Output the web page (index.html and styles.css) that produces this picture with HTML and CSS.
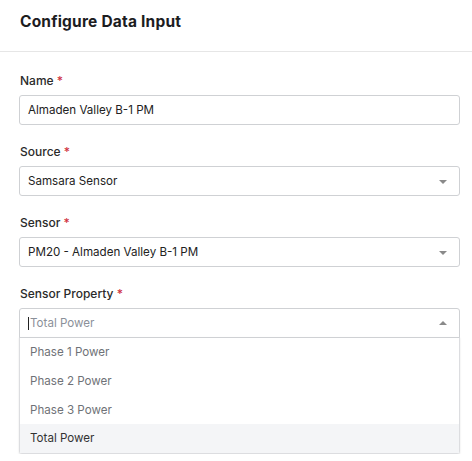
FILE: index.html
```html
<!DOCTYPE html>
<html>
<head>
<meta charset="utf-8">
<link rel="stylesheet" href="styles.css">
</head>
<body>
<div class="panel">
  <div class="header"><h1 class="title">Configure Data Input</h1></div>
  <div class="form">
    <div class="field">
      <label class="label">Name <span class="req">*</span></label>
      <div class="control">Almaden Valley B-1 PM</div>
    </div>
    <div class="field">
      <label class="label">Source <span class="req">*</span></label>
      <div class="control select">Samsara Sensor<span class="caret down"></span></div>
    </div>
    <div class="field">
      <label class="label">Sensor <span class="req">*</span></label>
      <div class="control select">PM20 - Almaden Valley B-1 PM<span class="caret down"></span></div>
    </div>
    <div class="field">
      <label class="label">Sensor Property <span class="req">*</span></label>
      <div class="combo">
        <div class="control select open"><span class="cursor"></span><span class="placeholder">Total Power</span><span class="caret up"></span></div>
        <ul class="menu">
          <li class="option">Phase 1 Power</li>
          <li class="option">Phase 2 Power</li>
          <li class="option">Phase 3 Power</li>
          <li class="option active">Total Power</li>
        </ul>
      </div>
    </div>
  </div>
</div>
</body>
</html>
```
FILE: styles.css
```css
* { box-sizing: border-box; }
body {
  margin: 0;
  background: #fff;
  font-family: Inter, "Noto Sans", sans-serif;
  color: #222;
}
.header {
  height: 52px;
  border-bottom: 1px solid #e6e6e6;
  padding: 12px 20px 0;
}
.title {
  margin: 0;
  font-size: 15.5px;
  font-weight: 700;
  color: #1d1d1f;
  letter-spacing: 0.2px;
}
.form {
  padding: 21px 12px 0 19px;
  display: flex;
  flex-direction: column;
  gap: 19px;
}
.field { display: flex; flex-direction: column; }
.label {
  font-size: 12px;
  font-weight: 500;
  color: #2a2a2a;
  margin-left: 1px;
  height: 22px;
  line-height: 16px;
}
.req { color: #d0333f; }
.control {
  height: 30px;
  border: 1px solid #cfd1d4;
  border-radius: 3px;
  padding: 0 8px;
  display: flex;
  align-items: center;
  font-size: 11.6px;
  color: #222;
  position: relative;
}
.select { padding-right: 30px; }
.caret {
  position: absolute;
  right: 12px;
  top: 13px;
  width: 0; height: 0;
  border-left: 4px solid transparent;
  border-right: 4px solid transparent;
}
.caret.down { border-top: 4px solid #8a8a8a; }
.caret.up { border-bottom: 4px solid #8a8a8a; top: 12px; }
.cursor {
  display: inline-block;
  width: 1px;
  height: 13px;
  background: #222;
  margin-right: 1px;
}
.placeholder { color: #8b9099; }
.combo { display: flex; flex-direction: column; }
.open { border-radius: 3px 3px 0 0; }
.menu {
  list-style: none;
  margin: 0;
  padding: 0;
  border: 1px solid #dcdde0;
  border-top: 1px solid #e8e8e8;
  border-radius: 0 0 3px 3px;
  box-shadow: 0 1px 2px rgba(0,0,0,0.12);
  margin-top: -1px;
}
.option {
  height: 28.7px;
  display: flex;
  align-items: center;
  padding: 0 10px;
  font-size: 11.6px;
  color: #6f7277;
}
.option.active {
  background: #f4f5f7;
  color: #333;
}
```
